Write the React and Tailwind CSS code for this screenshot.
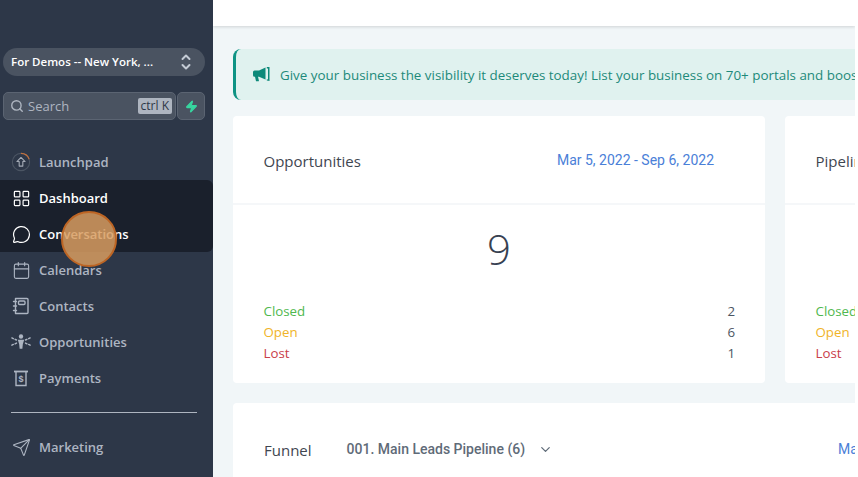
import React from "react";
import { LayoutGrid, MessageCircle, Calendar, Send, Search, ChevronDown, Zap } from "lucide-react";

const Contacts = () => (
  <svg width="20" height="20" viewBox="0 0 20 20" fill="none" stroke="currentColor" strokeWidth="1.4" strokeLinecap="round" strokeLinejoin="round">
    <path d="M4.500 2.500H16a1 1 0 0 1 1 1v13a1 1 0 0 1-1 1H4.500z" />
    <rect x="7.500" y="5" width="6.500" height="3.500" rx="1" />
    <path d="M2.500 5.500h3M2.500 10h3M2.500 14.500h3" />
  </svg>
);
const Opp = () => (
  <svg width="22" height="20" viewBox="0 0 22 20" fill="currentColor">
    <circle cx="11" cy="4" r="2.400" />
    <path d="M7.500 7.500h7l-1.500 5-.5 5h-3l-.5-5z" />
    <g stroke="currentColor" strokeWidth="1.600" fill="none" strokeLinecap="round">
      <path d="M1 5.500l1.500.8M4.500 7l1.500.8M1 13.500l1.500-.8M4.500 12l1.500-.8M21 5.500l-1.500.8M17.500 7l-1.500.8M21 13.500l-1.500-.8M17.500 12l-1.500-.8" />
    </g>
  </svg>
);
const Pay = () => (
  <svg width="20" height="20" viewBox="0 0 20 20" fill="none" stroke="currentColor" strokeWidth="1.400">
    <path d="M3 3.500h14" strokeWidth="1.800" />
    <path d="M5 3.500V17.500h10V3.500" />
    <text x="10" y="14" textAnchor="middle" fontSize="9" fontWeight="700" fill="currentColor" stroke="none" fontFamily="'Liberation Sans', sans-serif">$</text>
  </svg>
);
const Rocket = () => (
  <svg width="22" height="22" viewBox="0 0 22 22" fill="none">
    <circle cx="11" cy="11" r="9.500" stroke="#4b5563" strokeWidth="1.200" />
    <path d="M11 1.500a9.500 9.500 0 0 1 9 6.500" stroke="#c2703d" strokeWidth="1.200" />
    <path d="M11 6l4.500 4.500H13V15.500H9V10.500H6.500z" stroke="#a4abb6" strokeWidth="1.200" strokeLinejoin="round" />
  </svg>
);
const Horn = () => (
  <svg width="17" height="15" viewBox="0 0 17 15" className="shrink-0" fill="#0e8a7a">
    <path d="M0 5a1.500 1.500 0 0 1 1.500-1.500H6L12.500 .5V12.500L6 9.800H5l.9 3.700a.6.6 0 0 1-.6.700H3.500a.6.6 0 0 1-.6-.5L2 9.800H1.500A1.500 1.500 0 0 1 0 8.300z" />
    <path d="M13.800 0L16.500 0V14L13.800 13.500V12.200L15 12.400V1.500L13.800 1.400z" />
  </svg>
);
const UpDown = () => (
  <svg width="10" height="16" viewBox="0 0 10 16" fill="none" stroke="#c4cbd5" strokeWidth="2" strokeLinecap="round" strokeLinejoin="round">
    <path d="M1.500 5L5 1.500 8.500 5M1.500 11L5 14.500 8.500 11" />
  </svg>
);

const Item = ({ icon, label, active }) => (
  <div className={`flex h-9 items-center gap-2 pl-[11px] pt-[2px] text-[13px] font-semibold ${active ? "text-white" : "text-[#adb5c2]"}`}>
    <span className="-mt-[2px] flex w-5 justify-center">{icon}</span>
    <span>{label}</span>
  </div>
);

const Row = ({ label, value, color }) => (
  <div className="flex h-[21px] items-center justify-between">
    <span className={color}>{label}</span>
    <span className="text-[#4b5563]">{value}</span>
  </div>
);

const StatCard = ({ title, date, value }) => (
  <section className="h-[267px] w-[532px] shrink-0 rounded-[4px] bg-white">
    <div className="flex h-[89px] items-center justify-between border-b-2 border-[#f5f7f9] pl-[30.500px] pr-[51px] pt-[3px]">
      <h2 className="text-[15px] text-[#3f4650]">{title}</h2>
      <span className="-mt-[2px] font-['Roboto',sans-serif] text-[14px] text-[#4a80d8]">{date}</span>
    </div>
    <div className="h-[58px] pt-[15px] text-center text-[42px] leading-[58px] font-light text-[#374151]">{value}</div>
    <div className="mt-[38px] pl-[30.500px] pr-[30px] text-[13.300px]">
      <Row label="Closed" value="2" color="text-[#4fb84f]" />
      <Row label="Open" value="6" color="text-[#f0b429]" />
      <Row label="Lost" value="1" color="text-[#c9404a]" />
    </div>
  </section>
);

export default function App() {
  return (
    <div className="relative flex h-[477px] w-[858px] overflow-hidden bg-white font-['Open_Sans',sans-serif]">
      <aside className="flex h-full w-[213px] shrink-0 flex-col bg-[#2d3748]">
        <div className="ml-[3px] mr-[8px] mt-[48px] flex h-[28px] items-center justify-between rounded-full bg-[#4a5361] pl-2 pr-[14px] text-[11.500px] font-semibold text-white">
          <span>For Demos -- New York, ...</span>
          <UpDown />
        </div>
        <div className="ml-[3px] mr-[8px] mt-[16px] flex h-[28px] gap-px">
          <div className="flex flex-1 items-center rounded-[5px] border border-[#5b6472] bg-[#4a5361] pl-[6px] pr-[3px] text-[#aeb5c0]">
            <Search size={14} strokeWidth={2.4} />
            <span className="ml-[4px] flex-1 pt-[2px] text-[13px]">Search</span>
            <span className="rounded-[2px] bg-[#aeb5c0] px-[3px] text-[12px] leading-[16px] text-[#2d3748]">ctrl K</span>
          </div>
          <div className="flex w-[28px] items-center justify-center rounded-[5px] border border-[#5b6472] bg-[#4a5361]">
            <Zap size={13} className="fill-[#37d6a0] text-[#37d6a0]" />
          </div>
        </div>
        <div className="mt-[24px]">
          <Item icon={<Rocket />} label="Launchpad" />
        </div>
        <div className="rounded-r-[6px] bg-[#1a202c]">
          <Item active icon={<LayoutGrid size={19} strokeWidth={1.5} />} label="Dashboard" />
          <Item active icon={<MessageCircle size={19} strokeWidth={1.5} />} label="Conversations" />
        </div>
        <Item icon={<Calendar size={19} strokeWidth={1.4} />} label="Calendars" />
        <Item icon={<Contacts />} label="Contacts" />
        <Item icon={<Opp />} label="Opportunities" />
        <Item icon={<Pay />} label="Payments" />
        <div className="ml-[11px] mr-[16px] my-[16px] h-px bg-[#aeb5c0]" />
        <Item icon={<Send size={19} strokeWidth={1.4} />} label="Marketing" />
      </aside>

      <main className="flex h-full w-[642px] shrink-0 flex-col overflow-hidden bg-[#f1f6f8]">
        <div className="h-[26px] shrink-0 bg-white shadow-[0_1px_3px_rgba(0,0,0,0.14)]" />
        <div className="ml-5 mt-[23px] flex h-[51px] w-[640px] shrink-0 items-center gap-[10px] whitespace-nowrap rounded-l-[8px] border-l-[3px] border-[#0e9384] bg-[#e0f2ef] pl-[17px] text-[13.400px] text-[#1d8a7a]">
          <Horn />
          <span className="pt-[2px]">Give your business the visibility it deserves today! List your business on 70+ portals and boost your presence</span>
        </div>
        <div className="ml-5 mt-4 flex shrink-0 gap-5">
          <StatCard title="Opportunities" date="Mar 5, 2022 - Sep 6, 2022" value="9" />
          <StatCard title="Pipeline Value" date="" value="" />
        </div>
        <section className="ml-5 mt-5 flex h-[80px] w-[640px] shrink-0 items-start whitespace-nowrap rounded-[4px] bg-white pl-[31px] pt-[36px]">
          <span className="text-[15px] leading-[22px] text-[#3f4650]">Funnel</span>
          <span className="ml-[35px] font-['Roboto',sans-serif] text-[14px] font-medium leading-[20px] text-[#5f6b78]">001. Main Leads Pipeline (6)</span>
          <ChevronDown size={15} className="ml-[13px] mt-[3px] shrink-0 text-[#5f6b78]" />
          <span className="ml-[285px] font-['Roboto',sans-serif] text-[14px] leading-[20px] text-[#4a80d8]">Mar 5, 2022</span>
        </section>
      </main>

      <div className="absolute left-[61px] top-[211px] h-[56px] w-[56px] rounded-full border-2 border-[#bd6524] bg-[#d89c60]/85" />
    </div>
  );
}
